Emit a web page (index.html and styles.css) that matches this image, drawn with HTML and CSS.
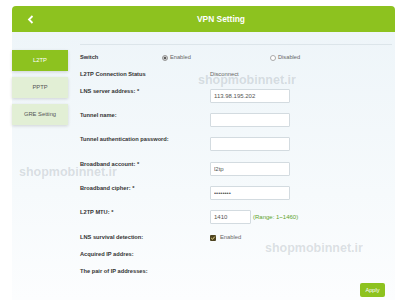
FILE: index.html
```html
<!DOCTYPE html>
<html lang="en">
<head>
  <meta charset="UTF-8">
  <meta name="viewport" content="width=device-width, initial-scale=1.0">
  <title>VPN Setting</title>
  <link rel="stylesheet" href="styles.css">
</head>
<body>
  <div class="page">
    <!-- Top bar -->
    <div class="header">
      <svg class="back" width="7" height="9" viewBox="0 0 7 9">
        <polyline points="5.5,1 2,4.5 5.5,8" fill="none" stroke="#fff" stroke-width="1.8"/>
      </svg>
      <div class="title">VPN Setting</div>
    </div>

    <div class="panel">
      <!-- Left tabs -->
      <div class="tabs">
        <div class="tab active">L2TP</div>
        <div class="tab">PPTP</div>
        <div class="tab">GRE Setting</div>
      </div>

      <!-- Form -->
      <div class="form">
        <div class="row row-text switch-row">
          <div class="label switch-label">Switch</div>
          <div class="option option-first"><span class="radio checked"></span>Enabled</div>
          <div class="option"><span class="radio"></span>Disabled</div>
        </div>
        <div class="row row-text status-row">
          <div class="label">L2TP Connection Status</div>
          <div class="value">Disconnect</div>
        </div>
        <div class="row row-input">
          <div class="label">LNS server address: *</div>
          <input class="field" type="text" value="113.98.195.202">
        </div>
        <div class="row row-input">
          <div class="label">Tunnel name:</div>
          <input class="field" type="text" value="">
        </div>
        <div class="row row-input">
          <div class="label">Tunnel authentication password:</div>
          <input class="field" type="text" value="">
        </div>
        <div class="row row-input">
          <div class="label">Broadband account: *</div>
          <input class="field" type="text" value="l2tp">
        </div>
        <div class="row row-input">
          <div class="label">Broadband cipher: *</div>
          <input class="field" type="password" value="12345678">
        </div>
        <div class="row row-input">
          <div class="label">L2TP MTU: *</div>
          <input class="field field-short" type="text" value="1410">
          <span class="range">(Range: 1~1460)</span>
        </div>
        <div class="row row-text">
          <div class="label">LNS survival detection:</div>
          <div class="value"><span class="checkbox">
            <svg width="6" height="6" viewBox="0 0 6 6"><polyline points="1.2,3 2.5,4.3 4.8,1.6" fill="none" stroke="#e6d58a" stroke-width="1"/></svg>
          </span>Enabled</div>
        </div>
        <div class="row row-text">
          <div class="label">Acquired IP addres:</div>
        </div>
        <div class="row row-text pair-row">
          <div class="label">The pair of IP addresses:</div>
        </div>
        <div class="actions">
          <button class="apply">Apply</button>
        </div>
      </div>
    </div>

    <!-- watermarks -->
    <span class="mark mark-1">shopmobinnet.ir</span>
    <span class="mark mark-2">shopmobinnet.ir</span>
    <span class="mark mark-3">shopmobinnet.ir</span>
  </div>
</body>
</html>
```

FILE: styles.css
```css
body {
  margin: 0;
  font-family: "Liberation Sans", Arial, sans-serif;
  background-color: #fff;
}

.page {
  position: relative;
  padding: 6px 8px 0 12px;
}

.header {
  height: 26px;
  background-color: #8dc21f;
  border-radius: 4px 4px 0 0;
  display: flex;
  align-items: center;
  padding-left: 15px;
}

.back {
  display: block;
}

.title {
  flex: 1;
  text-align: center;
  padding-left: 13px;
  color: #fff;
  font-size: 8.4px;
  font-weight: bold;
}

.panel {
  display: flex;
  min-height: 268px;
  background: linear-gradient(#eef5f9, #f6fafc 60%, #fcfdfe);
}

.tabs {
  width: 56px;
  padding-top: 18px;
}

.tab {
  height: 21px;
  line-height: 21px;
  margin-bottom: 6px;
  text-align: center;
  font-size: 5.8px;
  color: #555;
  background-color: #e2efd5;
  box-shadow: 0 1px 3px rgba(0, 0, 0, 0.15);
}

.tab.active {
  background-color: #8dc21f;
  color: #fff;
}

.form {
  flex: 1;
  margin: 12px 3px 0 12px;
  padding-top: 9px;
  border-top: 1px solid #dce5ea;
}

.row {
  display: flex;
  align-items: flex-start;
}

.row-text {
  height: 7px;
  line-height: 7px;
  margin-bottom: 10px;
}

.status-row {
  margin-bottom: 11px;
}

.pair-row {
  margin-bottom: 8px;
}

.row-input {
  height: 14px;
  margin-bottom: 10.2px;
}

.label {
  width: 130px;
  line-height: 7px;
  font-size: 5.7px;
  font-weight: bold;
  color: #333;
}

.row-input .label {
  margin-top: -1px;
}

.switch-label {
  width: 82px;
}

.option {
  display: flex;
  align-items: center;
  font-size: 5.7px;
  color: #666;
}

.option-first {
  width: 108px;
}

.radio {
  width: 4px;
  height: 4px;
  margin-right: 2px;
  border: 1px solid #aaa;
  border-radius: 50%;
  background-color: #fff;
  position: relative;
}

.radio.checked {
  background-color: #ccc;
  border-color: #999;
}

.radio.checked::after {
  content: "";
  position: absolute;
  left: 1px;
  top: 1px;
  width: 2px;
  height: 2px;
  border-radius: 50%;
  background-color: #333;
}

.value {
  display: flex;
  align-items: center;
  font-size: 5.8px;
  color: #666;
}

.field {
  box-sizing: border-box;
  width: 80px;
  height: 14px;
  margin: 0;
  padding: 0 3px;
  border: 1px solid #d3dbe0;
  border-radius: 1px;
  background-color: #fff;
  font-family: "Liberation Sans", Arial, sans-serif;
  font-size: 6px;
  color: #555;
  outline: none;
}

.field-short {
  width: 41px;
}

.range {
  margin-left: 2px;
  line-height: 14px;
  font-size: 6px;
  color: #5ea52b;
}

.checkbox {
  width: 6px;
  height: 6px;
  margin-right: 4px;
  border-radius: 1px;
  background-color: #4e4421;
  display: flex;
}

.actions {
  display: flex;
  justify-content: flex-end;
  padding-right: 7px;
}

.apply {
  width: 25px;
  height: 14px;
  padding: 0;
  border: none;
  border-radius: 2px;
  background-color: #8dc21f;
  color: #fff;
  font-family: "Liberation Sans", Arial, sans-serif;
  font-size: 5.6px;
}

/* faint watermark text over the page */
.mark {
  position: absolute;
  font-size: 12.5px;
  line-height: 12.5px;
  font-weight: bold;
  color: rgba(120, 130, 140, 0.24);
  white-space: nowrap;
}

.mark-1 {
  left: 198px;
  top: 74px;
}

.mark-2 {
  left: 19px;
  top: 166px;
}

.mark-3 {
  left: 265px;
  top: 242px;
}
```
